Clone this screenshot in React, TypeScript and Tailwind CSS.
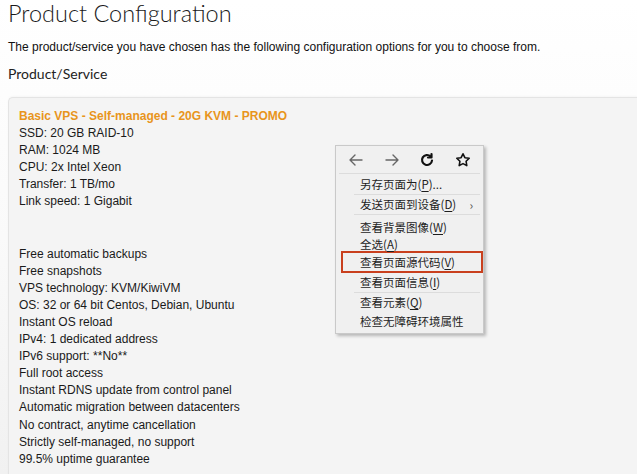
import React from "react";

const specs1 = [
  "SSD: 20 GB RAID-10",
  "RAM: 1024 MB",
  "CPU: 2x Intel Xeon",
  "Transfer: 1 TB/mo",
  "Link speed: 1 Gigabit",
];
const specs2 = [
  "Free automatic backups",
  "Free snapshots",
  "VPS technology: KVM/KiwiVM",
  "OS: 32 or 64 bit Centos, Debian, Ubuntu",
  "Instant OS reload",
  "IPv4: 1 dedicated address",
  "IPv6 support: **No**",
  "Full root access",
  "Instant RDNS update from control panel",
  "Automatic migration between datacenters",
  "No contract, anytime cancellation",
  "Strictly self-managed, no support",
  "99.5% uptime guarantee",
];

function Item({ pre, k, post = "", chevron = false, h = 17 }: { pre: string; k: string; post?: string; chevron?: boolean; h?: number }) {
  return (
    <div className="flex items-center justify-between" style={{ height: h }}>
      <span>
        {pre}(<span className="underline underline-offset-2">{k}</span>){post}
      </span>
      {chevron && <span className="mr-[10px] text-[12px] text-[#555]">›</span>}
    </div>
  );
}

function Sep({ full = false }: { full?: boolean }) {
  return <div className={`h-px bg-[#dcdcdc] ${full ? "mx-[3px]" : "ml-[18px] mr-[3px]"}`} />;
}

export default function App() {
  return (
    <div className="relative w-[637px] h-[474px] overflow-hidden bg-gradient-to-b from-white via-[#fafafa] to-[#f1f1f1]">
      <div className="pl-[8px]">
        <h1 className="-mt-[1px] h-[28px] text-[23.5px] leading-[28px] font-light text-[#1a1a1a] font-['Lato','Open_Sans',sans-serif]">
          Product Configuration
        </h1>
        <p className="mt-[13px] text-[12px] leading-[14px] text-[#111] font-['Liberation_Sans',Arial,sans-serif]">
          The product/service you have chosen has the following configuration options for you to choose from.
        </p>
        <h2 className="mt-[11px] text-[14px] leading-[18px] text-[#222] font-['Lato','Open_Sans',sans-serif]">
          Product/Service
        </h2>
        <div className="mt-[14px] rounded-tl-[5px] border-l border-t border-[#e4e4e4] bg-[#f4f4f4] shadow-[0_-1px_2px_rgba(0,0,0,0.03)] pl-[10px] pt-[10px] pb-[20px] text-[12px] leading-[17.1px] text-[#1a1a1a] font-['Liberation_Sans',Arial,sans-serif]">
          <div className="font-bold text-[#e8951c]">Basic VPS - Self-managed - 20G KVM - PROMO</div>
          {specs1.map((s) => (
            <div key={s}>{s}</div>
          ))}
          <div className="h-[35px]" />
          {specs2.map((s) => (
            <div key={s}>{s}</div>
          ))}
        </div>
      </div>

      <div className="absolute left-[335px] top-[145px] w-[149px] border border-[#c9c9c9] bg-[#f0f0f0] shadow-[2px_2px_3px_rgba(0,0,0,0.25)] text-[11.5px] leading-[17px] text-[#1e1e1e] font-['Noto_Sans_CJK_SC',sans-serif]">
        <div className="flex h-[27px] items-center justify-around px-[2px] text-[#555]">
          <svg width="16" height="16" viewBox="0 0 16 16" fill="none" stroke="#666" strokeWidth="1.4" strokeLinecap="round" strokeLinejoin="round">
            <path d="M14 8H2M7 3L2 8l5 5" />
          </svg>
          <svg width="16" height="16" viewBox="0 0 16 16" fill="none" stroke="#666" strokeWidth="1.4" strokeLinecap="round" strokeLinejoin="round">
            <path d="M2 8h12M9 3l5 5-5 5" />
          </svg>
          <svg width="16" height="16" viewBox="0 0 16 16" fill="none" stroke="#111" strokeWidth="2.2" strokeLinecap="round" strokeLinejoin="round">
            <path d="M13 8.5A5 5 0 1 1 11.5 4.4" />
            <path d="M12.5 2v3.5H9" />
          </svg>
          <svg width="16" height="16" viewBox="0 0 16 16" fill="none" stroke="#111" strokeWidth="1.6" strokeLinejoin="round">
            <path d="M8 1.8l1.9 3.9 4.3.6-3.1 3 .7 4.3L8 11.6l-3.8 2 .7-4.3-3.1-3 4.3-.6z" />
          </svg>
        </div>
        <Sep full />
        <div className="pl-[24px]">
          <Item pre="另存页面为" k="P" post="..." h={20} />
        </div>
        <Sep />
        <div className="pl-[24px]">
          <Item pre="发送页面到设备" k="D" chevron h={19} />
        </div>
        <Sep />
        <div className="pl-[24px] pt-[4px]">
          <Item pre="查看背景图像" k="W" />
          <Item pre="全选" k="A" />
        </div>
        <div className="-mt-[2px] ml-[5px] h-[22px] border-2 border-[#c9401e] pl-[17px] flex items-center">
          <Item pre="查看页面源代码" k="V" h={18} />
        </div>
        <div className="pl-[24px]">
          <Item pre="查看页面信息" k="I" h={19} />
        </div>
        <Sep />
        <div className="pl-[24px] pb-[3px]">
          <Item pre="查看元素" k="Q" h={19} />
          <div className="h-[18px] flex items-center">检查无障碍环境属性</div>
        </div>
      </div>
    </div>
  );
}
